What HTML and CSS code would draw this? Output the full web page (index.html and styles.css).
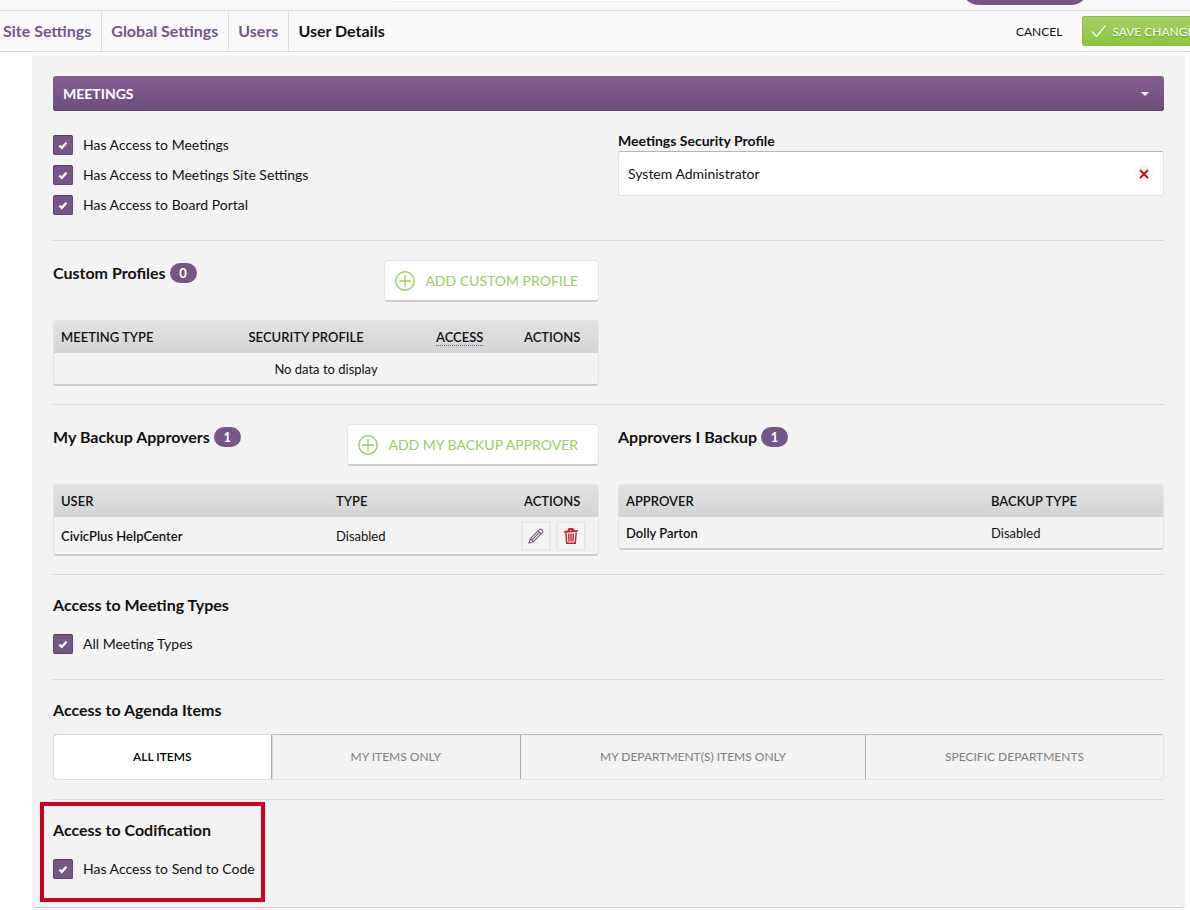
FILE: index.html
```html
<!DOCTYPE html>
<html lang="en">
<head>
    <meta charset="UTF-8">
    <meta name="viewport" content="width=device-width, initial-scale=1.0">
    <title>User Details</title>
    <link rel="stylesheet" href="styles.css">
</head>
<body>
    <!-- Shared icons -->
    <svg class="icon-defs" width="0" height="0" aria-hidden="true">
        <symbol id="icon-tick" viewBox="0 0 20 20">
            <path d="M6.4 10.7 L8.8 12.8 L13.4 7.8" fill="none" stroke="#fff" stroke-width="2.3"/>
        </symbol>
        <symbol id="icon-add" viewBox="0 0 20 20">
            <circle cx="10" cy="10" r="9.2" fill="none" stroke="currentColor" stroke-width="1.4"/>
            <path d="M10 4.2 V15.8 M4.2 10 H15.8" fill="none" stroke="currentColor" stroke-width="1.4"/>
        </symbol>
    </svg>

    <!-- Top bar -->
    <header class="topbar">
        <input class="search" type="search" aria-label="Search">
        <button class="pill" type="button" aria-label="Account"></button>
    </header>

    <!-- Breadcrumbs and page actions -->
    <div class="toolbar">
        <nav class="crumbs">
            <a href="#">Site Settings</a>
            <a href="#">Global Settings</a>
            <a href="#">Users</a>
            <span class="current">User Details</span>
        </nav>
        <div class="page-actions">
            <button class="cancel" type="button">CANCEL</button>
            <button class="save" type="button">
                <svg width="16" height="14" viewBox="0 0 16 14"><path d="M1 7.5 L5.5 12.5 L14.5 1.5" fill="none" stroke="#fff" stroke-width="1.2"/></svg>
                SAVE CHANGES
            </button>
        </div>
    </div>

    <main class="panel">
        <button class="panel-title" type="button">
            MEETINGS
            <span class="caret"></span>
        </button>

        <!-- General access -->
        <section class="section first columns">
            <div>
                <label class="check-row"><span class="check"><input type="checkbox" checked><svg><use href="#icon-tick"/></svg></span>Has Access to Meetings</label>
                <label class="check-row"><span class="check"><input type="checkbox" checked><svg><use href="#icon-tick"/></svg></span>Has Access to Meetings Site Settings</label>
                <label class="check-row"><span class="check"><input type="checkbox" checked><svg><use href="#icon-tick"/></svg></span>Has Access to Board Portal</label>
            </div>
            <div>
                <label class="field-label" for="profile">Meetings Security Profile</label>
                <div class="field">
                    <input type="text" id="profile" value="System Administrator">
                    <button class="clear" type="button" aria-label="Clear">
                        <svg width="10" height="10" viewBox="0 0 10 10"><path d="M1 1 L9 9 M9 1 L1 9" fill="none" stroke="#b5121b" stroke-width="1.8"/></svg>
                    </button>
                </div>
            </div>
        </section>

        <!-- Custom profiles -->
        <section class="section columns">
            <div>
                <div class="list-head">
                    <h2>Custom Profiles <span class="badge">0</span></h2>
                    <button class="add" type="button"><svg><use href="#icon-add"/></svg>ADD CUSTOM PROFILE</button>
                </div>
                <table class="grid">
                    <thead>
                        <tr>
                            <th>MEETING TYPE</th>
                            <th>SECURITY PROFILE</th>
                            <th class="col-access"><span class="hint">ACCESS</span></th>
                            <th class="col-actions">ACTIONS</th>
                        </tr>
                    </thead>
                    <tbody>
                        <tr><td class="empty" colspan="4">No data to display</td></tr>
                    </tbody>
                </table>
            </div>
        </section>

        <!-- Backup approvers -->
        <section class="section columns">
            <div>
                <div class="list-head">
                    <h2>My Backup Approvers <span class="badge">1</span></h2>
                    <button class="add" type="button"><svg><use href="#icon-add"/></svg>ADD MY BACKUP APPROVER</button>
                </div>
                <table class="grid">
                    <thead>
                        <tr>
                            <th>USER</th>
                            <th class="col-type">TYPE</th>
                            <th class="col-actions">ACTIONS</th>
                        </tr>
                    </thead>
                    <tbody>
                        <tr>
                            <td class="name">CivicPlus HelpCenter</td>
                            <td>Disabled</td>
                            <td class="row-actions">
                                <div class="row-buttons">
                                    <button class="edit" type="button" aria-label="Edit">
                                        <svg width="16" height="16" viewBox="0 0 16 16" fill="none" stroke="currentColor" stroke-width="1.1" stroke-linejoin="round"><path d="M1 15 L2.3 10.6 L11.3 1.6 C12 .9 13 .9 13.7 1.6 L14.4 2.3 C15.1 3 15.1 4 14.4 4.7 L5.4 13.7 Z M2.3 10.6 L5.4 13.7 M10.1 2.8 L13.2 5.9 M4 11.8 L11.4 4.4"/></svg>
                                    </button>
                                    <button class="delete" type="button" aria-label="Delete">
                                        <svg width="14" height="16" viewBox="0 0 14 16" fill="none" stroke="currentColor"><path stroke-width="1.8" d="M.2 3.8 L13.8 2.9 M4.4 3 L5.2 1 H8.6 L9.6 2.6"/><path stroke-width="1.4" d="M1.8 4.4 L2.7 15.2 H11.3 L12.2 4.4 M4.7 5.5 L5 13.6 M7 5.5 V13.6 M9.3 5.5 L9 13.6"/></svg>
                                    </button>
                                </div>
                            </td>
                        </tr>
                    </tbody>
                </table>
            </div>
            <div>
                <div class="list-head">
                    <h2>Approvers I Backup <span class="badge">1</span></h2>
                </div>
                <table class="grid">
                    <thead>
                        <tr>
                            <th>APPROVER</th>
                            <th class="col-backup">BACKUP TYPE</th>
                        </tr>
                    </thead>
                    <tbody>
                        <tr>
                            <td class="name">Dolly Parton</td>
                            <td>Disabled</td>
                        </tr>
                    </tbody>
                </table>
            </div>
        </section>

        <!-- Meeting types -->
        <section class="section">
            <h2>Access to Meeting Types</h2>
            <label class="check-row"><span class="check"><input type="checkbox" checked><svg><use href="#icon-tick"/></svg></span>All Meeting Types</label>
        </section>

        <!-- Agenda items -->
        <section class="section">
            <h2>Access to Agenda Items</h2>
            <div class="segments" role="radiogroup" aria-label="Access to Agenda Items">
                <label><input type="radio" name="agenda" checked>ALL ITEMS</label>
                <label><input type="radio" name="agenda">MY ITEMS ONLY</label>
                <label><input type="radio" name="agenda">MY DEPARTMENT(S) ITEMS ONLY</label>
                <label><input type="radio" name="agenda">SPECIFIC DEPARTMENTS</label>
            </div>
        </section>

        <!-- Codification -->
        <section class="section">
            <div class="highlight">
                <h2>Access to Codification</h2>
                <label class="check-row"><span class="check"><input type="checkbox" checked><svg><use href="#icon-tick"/></svg></span>Has Access to Send to Code</label>
            </div>
        </section>
    </main>
</body>
</html>
```
FILE: styles.css
```css
* {
    box-sizing: border-box;
}
body {
    font-family: Lato, "Open Sans", sans-serif;
    font-size: 14px;
    line-height: 20px;
    margin: 0;
    color: #111;
    background-color: #fff;
}
button,
input {
    font-family: inherit;
    color: inherit;
}
button {
    padding: 0;
    border: 0;
    background: none;
    cursor: pointer;
}
.icon-defs {
    display: block;
}

/* Top bar */
.topbar {
    display: flex;
    align-items: flex-end;
    justify-content: flex-end;
    height: 11px;
    padding-right: 101px;
    overflow: hidden;
    background: #f9f9f9;
    border-bottom: 1px solid #ddd;
}
.search {
    flex: none;
    width: 456px;
    height: 36px;
    margin: 0 119px 8px 0;
    background: #fff;
    border: 1px solid #eee;
    border-radius: 4px;
}
.pill {
    flex: none;
    width: 128px;
    height: 36px;
    margin-bottom: 5px;
    border-radius: 18px;
    background: #765687;
}

/* Breadcrumbs */
.toolbar {
    display: flex;
    justify-content: space-between;
    height: 41px;
    overflow: hidden;
    background: #f9f9f9;
    border-bottom: 1px solid #d8d8d8;
}
.crumbs {
    display: flex;
    padding-left: 3px;
    font-size: 16px;
    font-weight: 700;
    line-height: 40px;
}
.crumbs a {
    margin-right: 9px;
    padding-right: 10px;
    border-right: 1px solid #ddd;
    color: #765687;
    text-decoration: none;
}
.page-actions {
    display: flex;
    align-items: center;
    gap: 20px;
    margin-right: -24px;
}
.cancel {
    font-size: 12px;
}
.save {
    display: flex;
    align-items: center;
    gap: 5px;
    height: 30px;
    padding: 0 12px 0 8px;
    border: 1px solid #8bc043;
    border-radius: 2px;
    background: linear-gradient(#a4d165, #8cc63f);
    color: #fff;
    font-size: 12px;
    text-shadow: 0 1px 1px #6d9c32;
    white-space: nowrap;
}

/* Panel */
.panel {
    margin: 3px 5px 2px 32px;
    padding: 21px 21px 3px;
    background: #f3f3f3;
    border-radius: 4px;
    border-bottom: 1px solid #ccc;
}
.panel-title {
    display: flex;
    align-items: center;
    justify-content: space-between;
    width: 100%;
    height: 35px;
    padding: 0 15px 0 10px;
    border-radius: 3px;
    background: linear-gradient(#855f94, #6a4d79);
    box-shadow: inset 0 -1px 0 #614470;
    color: #fff;
    font-size: 14px;
    font-weight: 700;
}
.caret {
    border: 4px solid transparent;
    border-top-color: #fff;
    border-bottom: 0;
}
.section {
    padding: 19px 0 18px;
    border-top: 1px solid #d8d8d8;
}
.section.first {
    border-top: 0;
}
.columns {
    display: grid;
    grid-template-columns: 1fr 1fr;
    gap: 19px;
    align-items: start;
}
h2 {
    display: flex;
    align-items: center;
    gap: 4px;
    margin: 0 0 13px;
    font-size: 16px;
    font-weight: 700;
    line-height: 22px;
}
.badge {
    min-width: 27px;
    border-radius: 10px;
    background: #765687;
    color: #fff;
    font-size: 13px;
    line-height: 20px;
    text-align: center;
}

/* Check boxes */
.check-row {
    display: flex;
    align-items: center;
    gap: 10px;
    height: 30px;
    font-size: 14px;
}
.section > .check-row,
.highlight .check-row,
.columns .check-row:last-child {
    margin-bottom: 2px;
}
.check {
    display: grid;
    width: 20px;
    height: 20px;
}
.check input {
    grid-area: 1 / 1;
    width: 20px;
    height: 20px;
    margin: 0;
    appearance: none;
    border: 1px solid #604571;
    border-top-color: #513962;
    border-radius: 2px;
    background: #765687;
}
.check svg {
    grid-area: 1 / 1;
    width: 20px;
    height: 20px;
    pointer-events: none;
}
.check input:not(:checked) + svg {
    display: none;
}

/* Profile field */
.field-label {
    display: block;
    line-height: 21px;
    font-weight: 700;
}
.field {
    display: flex;
    align-items: center;
    height: 45px;
    padding: 0 9px;
    background: #fff;
    border: 1px solid #e2e2e2;
    border-top-color: #b5b5b5;
    border-radius: 3px;
}
.field input {
    flex: 1;
    min-width: 0;
    padding: 0;
    border: 0;
    font-size: 14px;
    background: none;
}
.clear {
    display: grid;
    place-items: center;
    width: 20px;
    height: 20px;
    border-radius: 10px;
    background: #f7f7f7;
}

/* Lists */
.list-head {
    display: flex;
    align-items: flex-start;
    justify-content: space-between;
    min-height: 42px;
    margin-bottom: 18px;
}
.list-head h2 {
    margin: 2px 0 0;
}
.add {
    display: flex;
    align-items: center;
    gap: 10px;
    height: 42px;
    padding: 0 20px 0 10px;
    border: 1px solid #e6e6e6;
    border-bottom: 2px solid #ccc;
    border-radius: 4px;
    background: #fff;
    color: #9bce5a;
    font-size: 14px;
}
.add svg {
    width: 20px;
    height: 20px;
}
.grid {
    width: 100%;
    table-layout: fixed;
    border-collapse: separate;
    border-spacing: 0;
    border: 1px solid #e4e4e4;
    border-bottom: 2px solid #ccc;
    border-radius: 4px;
    font-size: 13px;
}
.grid th {
    height: 32px;
    padding: 0 7px;
    font-size: 13px;
    font-weight: 600;
    text-align: left;
}
.grid thead {
    background: linear-gradient(#e2e2e2, #d4d4d4);
}
.grid td {
    height: 31px;
    padding: 0 7px;
}
.grid .name {
    font-weight: 600;
}
.grid .empty {
    text-align: center;
}
.col-access {
    width: 88px;
}
.col-actions {
    width: 81px;
}
.col-type {
    width: 188px;
}
.col-backup {
    width: 179px;
}
.hint {
    border-bottom: 1px dotted #765687;
}
.grid .row-actions {
    height: 37px;
    padding: 0 4px;
}
.row-buttons {
    display: flex;
    gap: 5px;
}
.row-buttons button {
    display: grid;
    place-items: center;
    width: 30px;
    height: 30px;
    border: 2px solid #e8e8e8;
    border-radius: 3px;
}
.edit {
    color: #765687;
}
.delete {
    color: #c1202f;
}

/* Segmented choice */
.segments {
    display: flex;
    height: 46px;
    margin-bottom: 1px;
    border: 1px solid #e2e2e2;
    border-top-color: #b5b5b5;
    border-radius: 4px;
}
.segments label {
    display: flex;
    flex: 1 1 auto;
    align-items: center;
    justify-content: center;
    border-right: 1px solid #aaa;
    padding: 0 20px;
    color: #808080;
    font-size: 12px;
    cursor: pointer;
}
.segments label:last-child {
    border-right: 0;
}
.segments label:has(:checked) {
    background: #fff;
    border-radius: 4px 0 0 4px;
    box-shadow: 0 0 0 1px #ddd;
    color: #000;
    font-weight: 600;
}
.segments input {
    width: 0;
    height: 0;
    margin: 0;
    appearance: none;
}

/* Outlined call-out drawn over the section */
.highlight {
    position: relative;
    width: fit-content;
}
.highlight::after {
    content: "";
    position: absolute;
    inset: -17px -10px -18px -13px;
    border: 4px solid #cb0020;
    pointer-events: none;
}
```
